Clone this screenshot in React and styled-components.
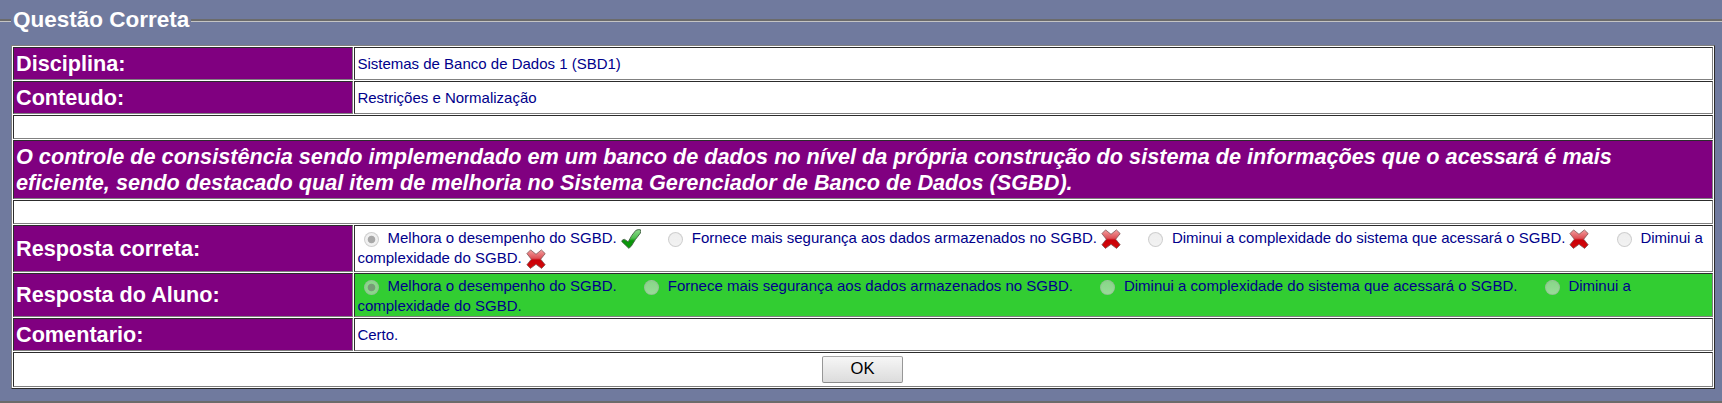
import React from 'react';
import styled, { createGlobalStyle, css } from 'styled-components';

const Global = createGlobalStyle`
  body {
    margin: 0;
    overflow: hidden;
    background: #707a9e;
    color: #00008b;
    font: 15px/20px "Liberation Sans", Arial, sans-serif;
  }
`;

const Fieldset = styled.fieldset`
  box-sizing: border-box;
  height: 396px;
  margin: 7px 0 0;
  padding: 11px 7px 0 11px;
  border-style: solid;
  border-width: 3px 0 2px;
  border-color: #6b6b6b;
  border-image: linear-gradient(#6b6b6b 2px, #c4c4c4 2px, #c4c4c4 3px, #6b6b6b 3px) 3 0 2;
  min-width: 0;
`;

const Legend = styled.legend`
  height: 27px;
  padding: 0 2px;
  color: #fff;
  font-size: 22.5px;
  font-weight: bold;
  line-height: 25px;
`;

const Table = styled.table`
  width: 1704px;
  table-layout: fixed;
  border: 1px solid;
  border-color: #808080 #2c2c2c #2c2c2c #808080;
  border-spacing: 1px;
  background: #fff;
`;

const LabelCol = styled.col`
  width: 340px;
`;

const Row = styled.tr`
  height: ${(p) => p.$h}px;
`;

const cell = css`
  box-sizing: border-box;
  border: 1px solid;
  border-color: #2c2c2c #808080 #808080 #2c2c2c;
  text-align: left;
`;

const Label = styled.th`
  ${cell}
  padding: 0 2px;
  background: #800080;
  color: #fff;
  font-size: 21.67px;
  line-height: 26px;
  font-style: ${(p) => (p.$italic ? 'italic' : 'normal')};
`;

const Value = styled.td`
  ${cell}
  padding: 0 2px 0 2.4px;
`;

const Answers = styled.td`
  ${cell}
  padding: 2px 2px 0 2.4px;
  vertical-align: top;
  background: ${(p) => (p.$right ? '#32cd32' : '#fff')};
`;

const ButtonCell = styled.td`
  ${cell}
  padding: 0 2px 0 0;
  text-align: center;
`;

const Button = styled.button`
  box-sizing: border-box;
  display: block;
  width: 81px;
  height: 27px;
  margin: 0 auto;
  padding: 0 0 2px 1px;
  border: 1px solid;
  border-color: #a6a6a6 #979797 #8c8c8c;
  border-radius: 2px;
  background: linear-gradient(#f6f6f6, #dcdcdc);
  color: #000;
  font: 16.6px/23px "Liberation Sans", Arial, sans-serif;
`;

const Radio = styled.span.attrs({ role: 'radio', 'aria-disabled': true })`
  box-sizing: border-box;
  display: inline-block;
  width: 15px;
  height: 15px;
  margin: 0 8.5px 0 ${(p) => (p.$first ? 6.6 : 27.45)}px;
  vertical-align: -4px;
  border: 1px solid rgba(160, 160, 160, 0.42);
  border-radius: 50%;
  background: ${(p) =>
    p.$on
      ? 'radial-gradient(circle, rgba(140,140,140,.76) 3.4px, rgba(226,226,226,.5) 4.2px)'
      : 'linear-gradient(rgba(222,222,222,.5), rgba(232,232,232,.56))'};
`;

const Icon = styled.svg`
  display: inline-block;
  width: 20px;
  height: 20px;
  margin: 0 0 -2px 4px;
  vertical-align: -4px;
`;

const Check = () => (
  <Icon viewBox="0 0 20 20">
    <defs>
      <linearGradient id="green" x1="0" y1="0" x2="0" y2="1">
        <stop offset="0" stopColor="#8fd98f" />
        <stop offset=".45" stopColor="#4fc04f" />
        <stop offset=".6" stopColor="#0b960b" />
        <stop offset="1" stopColor="#0a9a0a" />
      </linearGradient>
    </defs>
    <path
      d="M.7 12.4Q1.2 10.2 3.6 10.4L7.2 12.9Q10.6 5.6 14.8 1.4Q17.2 .2 19.5 .8Q20 2.6 19.3 4.2Q14 10.4 10.2 17.3L7.8 19.3Q4 15.6 .7 12.4Z"
      fill="url(#green)"
      stroke="#3f5f3f"
      strokeWidth=".9"
      strokeLinejoin="round"
    />
  </Icon>
);

const Cross = () => (
  <Icon viewBox="0 0 20 20">
    <defs>
      <linearGradient id="red" x1="0" y1="0" x2="0" y2="1">
        <stop offset="0" stopColor="#f3a0a0" />
        <stop offset=".45" stopColor="#dd5055" />
        <stop offset=".55" stopColor="#c90008" />
        <stop offset="1" stopColor="#d40a0a" />
      </linearGradient>
    </defs>
    <path
      d="M4.6 .9 10 5.3 15.4 .9 19.2 4.6 14.7 10.2 19.2 15.8 15.6 19.4 10 15.3 4.4 19.4 .9 15.8 5.3 10.2 .9 4.6Z"
      fill="url(#red)"
      stroke="#7d5555"
      strokeWidth=".8"
      strokeLinejoin="round"
    />
  </Icon>
);

const options = [
  'Melhora o desempenho do SGBD.',
  'Fornece mais segurança aos dados armazenados no SGBD.',
  'Diminui a complexidade do sistema que acessará o SGBD.',
  'Diminui a complexidade do SGBD.',
];

const Options = ({ marks }) =>
  options.map((text, i) => (
    <React.Fragment key={text}>
      <Radio $first={i === 0} $on={i === 0} aria-checked={i === 0} />
      <span>{text}</span>
      {marks && (i === 0 ? <Check /> : <Cross />)}
    </React.Fragment>
  ));

export default function App() {
  return (
    <>
      <Global />
      <Fieldset>
        <Legend>Questão Correta</Legend>
        <Table>
          <colgroup>
            <LabelCol />
            <col />
          </colgroup>
          <tbody>
            <Row $h={33}>
              <Label>Disciplina:</Label>
              <Value>Sistemas de Banco de Dados 1 (SBD1)</Value>
            </Row>
            <Row $h={33}>
              <Label>Conteudo:</Label>
              <Value>Restrições e Normalização</Value>
            </Row>
            <Row $h={24}>
              <Value colSpan={2} />
            </Row>
            <Row $h={59}>
              <Label colSpan={2} $italic>
                O controle de consistência sendo implemendado em um banco de dados no nível da própria construção do
                sistema de informações que o acessará é mais
                <br />
                eficiente, sendo destacado qual item de melhoria no Sistema Gerenciador de Banco de Dados (SGBD).
              </Label>
            </Row>
            <Row $h={24}>
              <Value colSpan={2} />
            </Row>
            <Row $h={47}>
              <Label>Resposta correta:</Label>
              <Answers>
                <Options marks />
              </Answers>
            </Row>
            <Row $h={44}>
              <Label>Resposta do Aluno:</Label>
              <Answers $right>
                <Options />
              </Answers>
            </Row>
            <Row $h={33}>
              <Label>Comentario:</Label>
              <Value>Certo.</Value>
            </Row>
            <Row $h={35}>
              <ButtonCell colSpan={2}>
                <Button>OK</Button>
              </ButtonCell>
            </Row>
          </tbody>
        </Table>
      </Fieldset>
    </>
  );
}
